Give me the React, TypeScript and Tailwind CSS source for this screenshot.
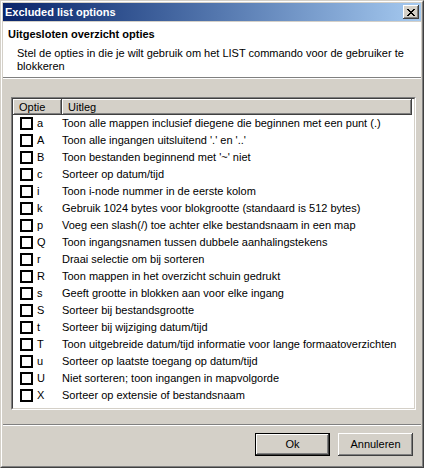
import React from 'react';

const OPTIONS: [string, string][] = [
  ['a', 'Toon alle mappen inclusief diegene die beginnen met een punt (.)'],
  ['A', "Toon alle ingangen uitsluitend '.' en '..'"],
  ['B', "Toon bestanden beginnend met '~' niet"],
  ['c', 'Sorteer op datum/tijd'],
  ['i', 'Toon i-node nummer in de eerste kolom'],
  ['k', 'Gebruik 1024 bytes voor blokgrootte (standaard is 512 bytes)'],
  ['p', 'Voeg een slash(/) toe achter elke bestandsnaam in een map'],
  ['Q', 'Toon ingangsnamen tussen dubbele aanhalingstekens'],
  ['r', 'Draai selectie om bij sorteren'],
  ['R', 'Toon mappen in het overzicht schuin gedrukt'],
  ['s', 'Geeft grootte in blokken aan voor elke ingang'],
  ['S', 'Sorteer bij bestandsgrootte'],
  ['t', 'Sorteer bij wijziging datum/tijd'],
  ['T', 'Toon uitgebreide datum/tijd informatie voor lange formaatoverzichten'],
  ['u', 'Sorteer op laatste toegang op datum/tijd'],
  ['U', 'Niet sorteren; toon ingangen in mapvolgorde'],
  ['X', 'Sorteer op extensie of bestandsnaam'],
];

const raised =
  'shadow-[inset_-1px_-1px_#404040,inset_1px_1px_#ffffff,inset_-2px_-2px_#808080]';

function Button({ label, isDefault }: { label: string; isDefault?: boolean }) {
  return (
    <div
      className={
        isDefault
          ? 'h-[23px] w-[75px] border border-black bg-[#d4d0c8]'
          : 'h-[23px] w-[75px] bg-[#d4d0c8]'
      }
    >
      <div className={`flex h-full w-full items-center justify-center ${raised}`}>
        {label}
      </div>
    </div>
  );
}

export default function App() {
  return (
    <div
      className="h-[468px] w-[424px] border border-t-[#d4d0c8] border-l-[#d4d0c8] border-r-[#404040] border-b-[#404040] bg-[#d4d0c8] text-[11px] leading-[13px] text-black"
      style={{ fontFamily: '"Liberation Sans", Arial, sans-serif' }}
    >
      <div className="flex h-full flex-col border border-t-white border-l-white border-r-[#808080] border-b-[#808080] p-px">
        {/* title bar */}
        <div className="flex h-[18px] shrink-0 items-center justify-between bg-gradient-to-r from-[#0a246a] to-[#a6caf0] pl-[2px] pr-[2px]">
          <span className="font-bold text-white">Excluded list options</span>
          <div className={`flex h-[14px] w-[16px] items-center justify-center bg-[#d4d0c8] ${raised}`}>
            <svg width="8" height="7" viewBox="0 0 8 7" shapeRendering="crispEdges">
              <path
                d="M0 0h2v1h-2zM6 0h2v1h-2zM1 1h2v1h-2zM5 1h2v1h-2zM2 2h4v1h-4zM3 3h2v1h-2zM2 4h4v1h-4zM1 5h2v1h-2zM5 5h2v1h-2zM0 6h2v1h-2zM6 6h2v1h-2z"
                fill="#000"
              />
            </svg>
          </div>
        </div>

        {/* header */}
        <div className="mt-px h-[57px] shrink-0 border-b border-b-white bg-white">
          <div className="h-[56px] border-b border-b-[#808080] pt-[6px]">
            <div className="pl-[5px] font-bold">Uitgesloten overzicht opties</div>
            <div className="mt-[6px] pl-[14px] pr-[4px]">
              Stel de opties in die je wilt gebruik om het LIST commando voor de gebruiker te blokkeren
            </div>
          </div>
        </div>

        {/* list */}
        <div className="ml-[8px] mt-[18px] h-[313px] w-[405px] border border-t-[#808080] border-l-[#808080] border-r-white border-b-white">
          <div className="h-full w-full border border-t-[#404040] border-l-[#404040] border-r-[#d4d0c8] border-b-[#d4d0c8] bg-white">
            <div className="flex h-[16px] w-[399px]">
              <div className={`flex w-[49px] items-center bg-[#d4d0c8] pl-[6px] ${raised}`}>Optie</div>
              <div className={`flex flex-1 items-center bg-[#d4d0c8] pl-[6px] ${raised}`}>Uitleg</div>
            </div>
            {OPTIONS.map(([key, text]) => (
              <div key={key + text} className="flex h-[17px] items-center">
                <div className="ml-[7px] h-[13px] w-[13px] border-2 border-black bg-white" />
                <div className="ml-[4px] w-[25px]">{key}</div>
                <div>{text}</div>
              </div>
            ))}
          </div>
        </div>

        {/* separator */}
        <div className="mt-[14px] h-[2px] border-t border-t-[#808080] border-b border-b-white" />

        {/* buttons */}
        <div className="mt-[7px] flex justify-end gap-[8px] pr-[8px]">
          <Button label="Ok" isDefault />
          <Button label="Annuleren" />
        </div>
      </div>
    </div>
  );
}
